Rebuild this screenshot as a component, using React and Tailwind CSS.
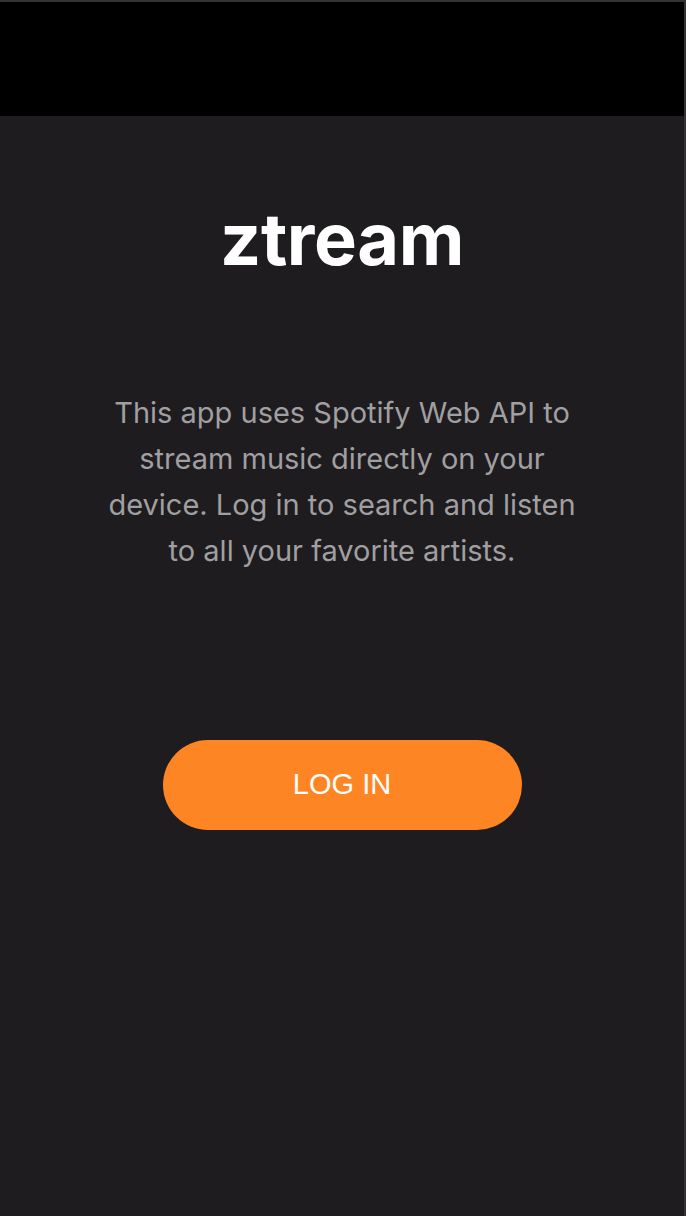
import React from 'react';

export default function App() {
  const handleLogin = () => {};

  return (
    <div className="min-h-[1216px] flex flex-col bg-[#1e1c1f] border-t-2 border-r-2 border-[#333335] font-['Inter',sans-serif]">
      <div className="h-[114px] bg-black" />
      <main className="flex flex-col items-center pt-[87px]">
        <h1 className="text-[72px] leading-none font-bold text-white tracking-[-0.4px]">ztream</h1>
        <p className="mt-[115px] w-[480px] text-center text-[29px] leading-[46px] text-[#a09fa1]">
          This app uses Spotify Web API to stream music directly on your device. Log in to search and listen to all your favorite artists.
        </p>
        <button
          onClick={handleLogin}
          className="mt-[166px] w-[359px] h-[90px] rounded-full bg-[#fe8524] text-white text-[29px] font-['Liberation_Sans',sans-serif]"
        >
          LOG IN
        </button>
      </main>
    </div>
  );
}
